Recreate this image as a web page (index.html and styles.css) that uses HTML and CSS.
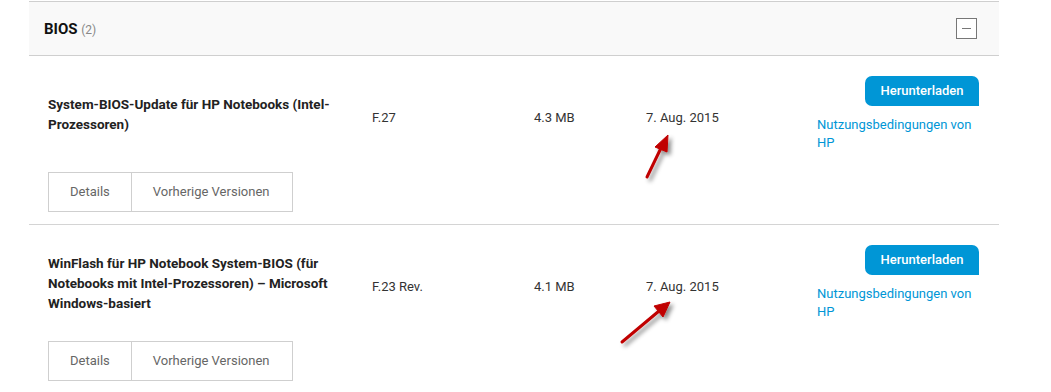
FILE: index.html
```html
<!DOCTYPE html>
<html lang="de">
  <head>
    <meta charset="UTF-8" />
    <meta name="viewport" content="width=device-width, initial-scale=1.0" />
    <title>BIOS Downloads</title>
    <link rel="stylesheet" href="styles.css">
  </head>
  <body>
    <div class="page">
      <div class="section">
        <div class="section-head">
          <h2>BIOS <span class="count">(2)</span></h2>
          <button class="toggle" aria-label="Zuklappen"><span></span></button>
        </div>

        <div class="row">
          <div class="row-main">
            <div class="title">System-BIOS-Update für HP Notebooks (Intel-Prozessoren)</div>
            <div class="cell">F.27</div>
            <div class="cell">4.3 MB</div>
            <div class="cell">7. Aug. 2015</div>
            <div class="actions">
              <a class="download" href="#">Herunterladen</a>
              <a class="terms" href="#">Nutzungsbedingungen von HP</a>
            </div>
          </div>
          <div class="tabs">
            <a href="#">Details</a>
            <a href="#">Vorherige Versionen</a>
          </div>
        </div>

        <div class="row">
          <div class="row-main">
            <div class="title">WinFlash für HP Notebook System-BIOS (für Notebooks mit Intel-Prozessoren) – Microsoft Windows-basiert</div>
            <div class="cell">F.23 Rev.</div>
            <div class="cell">4.1 MB</div>
            <div class="cell">7. Aug. 2015</div>
            <div class="actions">
              <a class="download" href="#">Herunterladen</a>
              <a class="terms" href="#">Nutzungsbedingungen von HP</a>
            </div>
          </div>
          <div class="tabs">
            <a href="#">Details</a>
            <a href="#">Vorherige Versionen</a>
          </div>
        </div>
      </div>

      <!-- annotation arrows drawn over the screenshot -->
      <svg class="marks" width="1051" height="392" viewBox="0 0 1051 392">
        <defs>
          <filter id="shade" x="-50%" y="-50%" width="200%" height="200%">
            <feDropShadow dx="3" dy="3" stdDeviation="2" flood-color="#000" flood-opacity="0.45" />
          </filter>
        </defs>
        <g filter="url(#shade)" fill="#c00000" stroke="#c00000">
          <line x1="647" y1="177" x2="661" y2="148" stroke-width="3" stroke-linecap="round" />
          <polygon points="668,135 655,147 667,152" stroke-width="1" />
          <line x1="622" y1="342" x2="659" y2="311" stroke-width="3" stroke-linecap="round" />
          <polygon points="670,302 654,306 663,317" stroke-width="1" />
        </g>
      </svg>
    </div>
  </body>
</html>
```

FILE: styles.css
```css
body {
  margin: 0;
  background: #fff;
  font-family: Roboto, 'Liberation Sans', sans-serif;
  font-size: 13px;
  color: #333;
}
.page {
  position: relative;
  height: 392px;
  overflow: hidden;
  padding: 1px 0 0 29px;
}
.section {
  width: 970px;
}
.section-head {
  display: flex;
  align-items: center;
  justify-content: space-between;
  height: 53px;
  padding: 0 22px 0 15px;
  background: #f9f9f9;
  border-top: 1px solid #cfcfcf;
  border-bottom: 1px solid #cfcfcf;
}
.section-head h2 {
  margin: 0;
  font-size: 15px;
  font-weight: 700;
  color: #111;
}
.count {
  font-size: 12px;
  font-weight: 400;
  color: #888;
}
.toggle {
  width: 21px;
  height: 21px;
  padding: 0;
  border: 1px solid #777;
  background: #fff;
  display: flex;
  align-items: center;
  justify-content: center;
}
.toggle span {
  width: 9px;
  height: 1px;
  background: #777;
}
.row {
  padding: 20px 20px 12px 19px;
  border-bottom: 1px solid #d4d4d4;
}
.row-main {
  display: grid;
  grid-template-columns: 324px 162px 112px 171px 162px;
  align-items: center;
}
.title {
  width: 300px;
  font-size: 13.5px;
  font-weight: 700;
  line-height: 20px;
  color: #222;
}
.cell {
  padding-top: 6px;
}
.actions {
  display: flex;
  flex-direction: column;
  align-items: flex-end;
}
.download {
  display: block;
  width: 114px;
  height: 30px;
  line-height: 30px;
  text-align: center;
  background: #0096d6;
  color: #fff;
  font-weight: 500;
  text-decoration: none;
  border-radius: 7px 7px 0 7px;
}
.terms {
  align-self: stretch;
  margin-top: 10px;
  line-height: 18px;
  color: #0096d6;
  text-decoration: none;
}
.tabs {
  display: flex;
  margin-top: 20px;
}
.tabs a {
  display: block;
  height: 38px;
  line-height: 38px;
  padding: 0 21px;
  border: 1px solid #cfcfcf;
  color: #666;
  text-decoration: none;
}
.tabs a + a {
  border-left: none;
  width: 118px;
}
.marks {
  position: absolute;
  left: 0;
  top: 0;
  pointer-events: none;
}
```
